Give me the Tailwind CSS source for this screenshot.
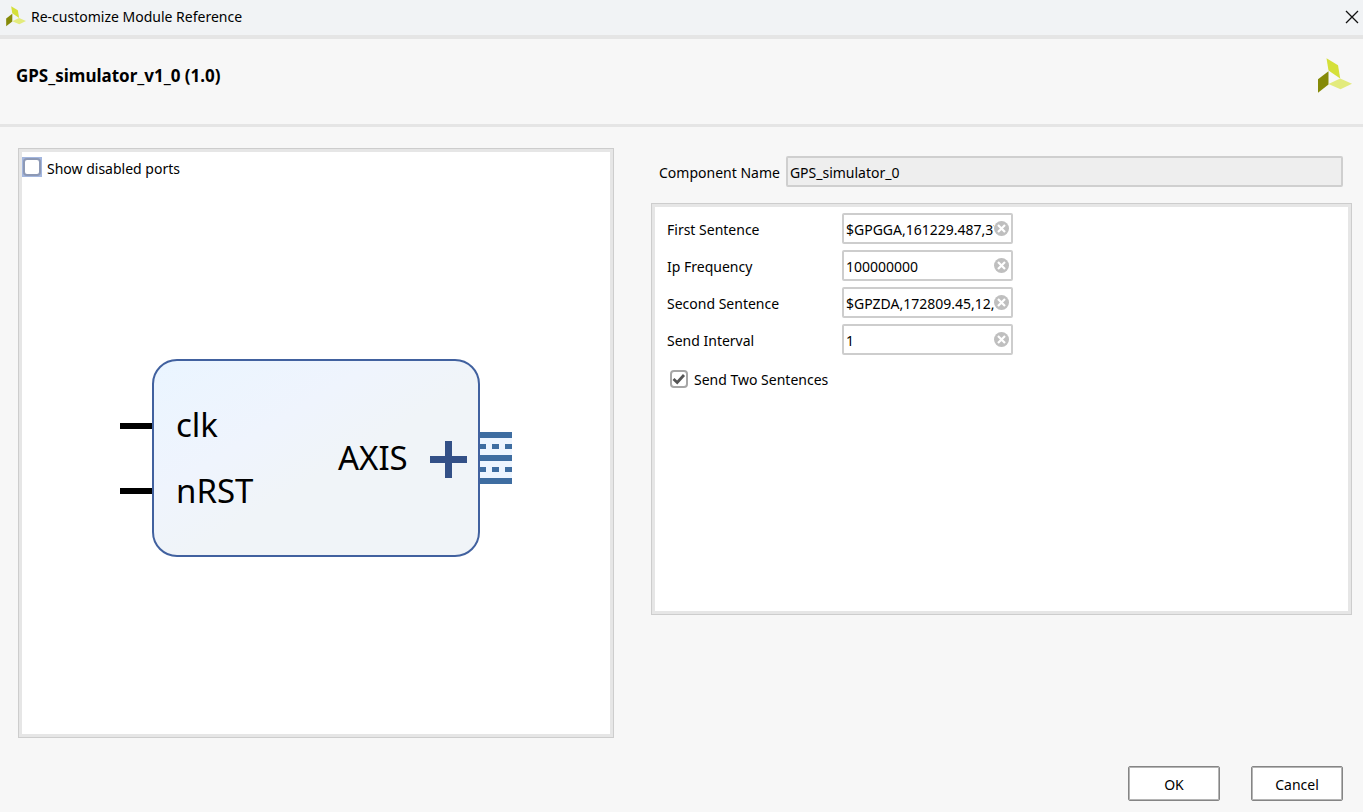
<!DOCTYPE html>
<html lang="en">
<head>
<meta charset="utf-8">
<title>Re-customize Module Reference</title>
<script src="https://cdn.jsdelivr.net/npm/@tailwindcss/browser@4"></script>
</head>
<body class="flex min-h-screen flex-col bg-[#f7f7f7] font-['Noto_Sans','Open_Sans',sans-serif] text-sm text-black">
  <svg class="hidden" aria-hidden="true">
    <symbol id="logo" viewBox="0 0 36 36">
      <path d="M10.500 0.300L22 7.300L24.200 20.500L12.500 12.500Z" fill="#d5e03a"/>
      <path d="M12.500 13.200V26.500L2 34.800V21.300Z" fill="#858a08"/>
      <path d="M12.500 26L24.200 20.500L36 25.700L24.500 31.300Z" fill="#e3eb7c"/>
    </symbol>
    <symbol id="clear" viewBox="0 0 15 15">
      <circle cx="7.500" cy="7.500" r="7.500" fill="#bfbfbf"/>
      <path d="M4 4L11 11M11 4L4 11" stroke="#fff" stroke-width="2.200"/>
    </symbol>
  </svg>

  <header class="flex h-[39px] items-center justify-between border-b-4 border-[#e5e5e5] bg-[#f1f3f5] pr-1 pb-[2px] pl-[5px]">
    <div class="flex items-center gap-[5px]">
      <svg class="size-[21px]" aria-hidden="true"><use href="#logo"/></svg>
      <span>Re-customize Module Reference</span>
    </div>
    <button type="button" aria-label="Close" class="flex size-[14px] items-center justify-center">
      <svg class="size-[14px]" viewBox="0 0 14 14" aria-hidden="true"><path d="M1 1L13 13M13 1L1 13" stroke="#111" stroke-width="1.300"/></svg>
    </button>
  </header>

  <section class="flex h-[88px] items-center justify-between border-b-3 border-[#e5e5e5] px-4 pb-3">
    <h1 class="pt-[2px] text-[17px] font-bold">GPS_simulator_v1_0 (1.0)</h1>
    <svg class="-mr-[5px] size-9" aria-hidden="true"><use href="#logo"/></svg>
  </section>

  <main class="grid flex-1 grid-cols-[596fr_701fr] gap-[37px] pt-[21px] pr-[11px] pl-[18px]">
    <section class="flex flex-col border border-[#cdcdcd]">
      <div class="flex flex-1 flex-col border-3 border-[#e6e6e6] bg-white">
        <label class="flex h-[30px] items-center gap-[5px]">
          <span class="grid bg-[#a3b6de] p-px">
            <input type="checkbox" class="size-[18px] appearance-none rounded-[4px] border-2 border-[#8d99b5] bg-white">
          </span>
          <span class="pt-[3px]">Show disabled ports</span>
        </label>
        <div class="flex flex-1 items-center justify-center">
          <svg class="h-[198px] w-[392px]" viewBox="0 0 392 198" role="img" aria-label="Block diagram">
            <defs>
              <linearGradient id="block" x1="0" y1="0" x2="1" y2="1">
                <stop offset="0" stop-color="#eaf5ff"/>
                <stop offset="0.350" stop-color="#eff4fd"/>
                <stop offset="0.550" stop-color="#f0f4f8"/>
                <stop offset="1" stop-color="#f0f4f8"/>
              </linearGradient>
            </defs>
            <rect x="33" y="1" width="326" height="196" rx="24" fill="url(#block)" stroke="#41619f" stroke-width="2"/>
            <path d="M0 67H32M0 132H32" stroke="#000" stroke-width="6"/>
            <rect x="360" y="73" width="32" height="52" fill="#edf5ff"/>
            <path d="M360 76H392M360 99H392M360 122H392" stroke="#3e6da1" stroke-width="6"/>
            <path d="M360 87.500H366M372 87.500H379M385 87.500H392M360 110.500H366M372 110.500H379M385 110.500H392" stroke="#3e6da1" stroke-width="5"/>
            <path d="M310 100.500H347M328.500 82V119" stroke="#335087" stroke-width="7"/>
            <g font-size="33" fill="#000">
              <text x="56" y="78">clk</text>
              <text x="56" y="144">nRST</text>
              <text x="218" y="111">AXIS</text>
            </g>
          </svg>
        </div>
      </div>
    </section>

    <section class="flex flex-col pt-2">
      <div class="flex items-center gap-[6px] pr-[9px] pl-2">
        <label for="component" class="pt-[2px]">Component Name</label>
        <input id="component" type="text" readonly value="GPS_simulator_0" class="h-[31px] min-w-0 flex-1 rounded-[2px] border-2 border-[#cfcfcf] bg-[#eeeeee] px-[2px] pt-[2px]">
      </div>
      <div class="mt-4 border border-[#cdcdcd]">
        <div class="min-h-[410px] border-3 border-[#e6e6e6] bg-white px-3 pt-[6px]">
          <div class="grid grid-cols-[175px_171px] items-center gap-y-[6px]">
            <label for="first" class="pt-[2px]">First Sentence</label>
            <div class="flex h-[31px] items-center rounded-[2px] border-2 border-[#cdcdcd] bg-white pr-[2px] pl-[2px]">
              <input id="first" type="text" value="$GPGGA,161229.487,3723.2475,N,12158.3416,W,1,07,1.0,9.0,M,,,,0000*18" class="h-full min-w-0 flex-1 pt-[2px] outline-none">
              <button type="button" aria-label="Clear First Sentence"><svg class="size-[15px]" aria-hidden="true"><use href="#clear"/></svg></button>
            </div>
            <label for="freq" class="pt-[2px]">Ip Frequency</label>
            <div class="flex h-[31px] items-center rounded-[2px] border-2 border-[#cdcdcd] bg-white pr-[2px] pl-[2px]">
              <input id="freq" type="text" value="100000000" class="h-full min-w-0 flex-1 pt-[2px] outline-none">
              <button type="button" aria-label="Clear Ip Frequency"><svg class="size-[15px]" aria-hidden="true"><use href="#clear"/></svg></button>
            </div>
            <label for="second" class="pt-[2px]">Second Sentence</label>
            <div class="flex h-[31px] items-center rounded-[2px] border-2 border-[#cdcdcd] bg-white pr-[2px] pl-[2px]">
              <input id="second" type="text" value="$GPZDA,172809.45,12," class="h-full min-w-0 flex-1 pt-[2px] outline-none">
              <button type="button" aria-label="Clear Second Sentence"><svg class="size-[15px]" aria-hidden="true"><use href="#clear"/></svg></button>
            </div>
            <label for="interval" class="pt-[2px]">Send Interval</label>
            <div class="flex h-[31px] items-center rounded-[2px] border-2 border-[#cdcdcd] bg-white pr-[2px] pl-[2px]">
              <input id="interval" type="text" value="1" class="h-full min-w-0 flex-1 pt-[2px] outline-none">
              <button type="button" aria-label="Clear Send Interval"><svg class="size-[15px]" aria-hidden="true"><use href="#clear"/></svg></button>
            </div>
          </div>
          <label class="mt-3 flex items-center gap-[6px] pl-[3px]">
            <span class="grid">
              <input type="checkbox" checked class="col-start-1 row-start-1 size-[18px] appearance-none rounded-[4px] border-2 border-[#a6a6a6] bg-white">
              <svg class="pointer-events-none col-start-1 row-start-1 size-[18px]" viewBox="0 0 18 18" aria-hidden="true"><path d="M3.500 9L7.200 12.500L14 5" fill="none" stroke="#555" stroke-width="2.800"/></svg>
            </span>
            <span class="pt-[3px]">Send Two Sentences</span>
          </label>
        </div>
      </div>
    </section>
  </main>

  <footer class="flex justify-end gap-[31px] pt-7 pr-5 pb-[11px]">
    <button type="button" class="h-[35px] w-[92px] rounded-[2px] border border-[#858585] bg-white pt-[2px] shadow-[inset_0_0_0_1px_#b5b5b5]">OK</button>
    <button type="button" class="h-[35px] w-[92px] rounded-[2px] border border-[#858585] bg-white pt-[2px] shadow-[inset_0_0_0_1px_#b5b5b5]">Cancel</button>
  </footer>
</body>
</html>
